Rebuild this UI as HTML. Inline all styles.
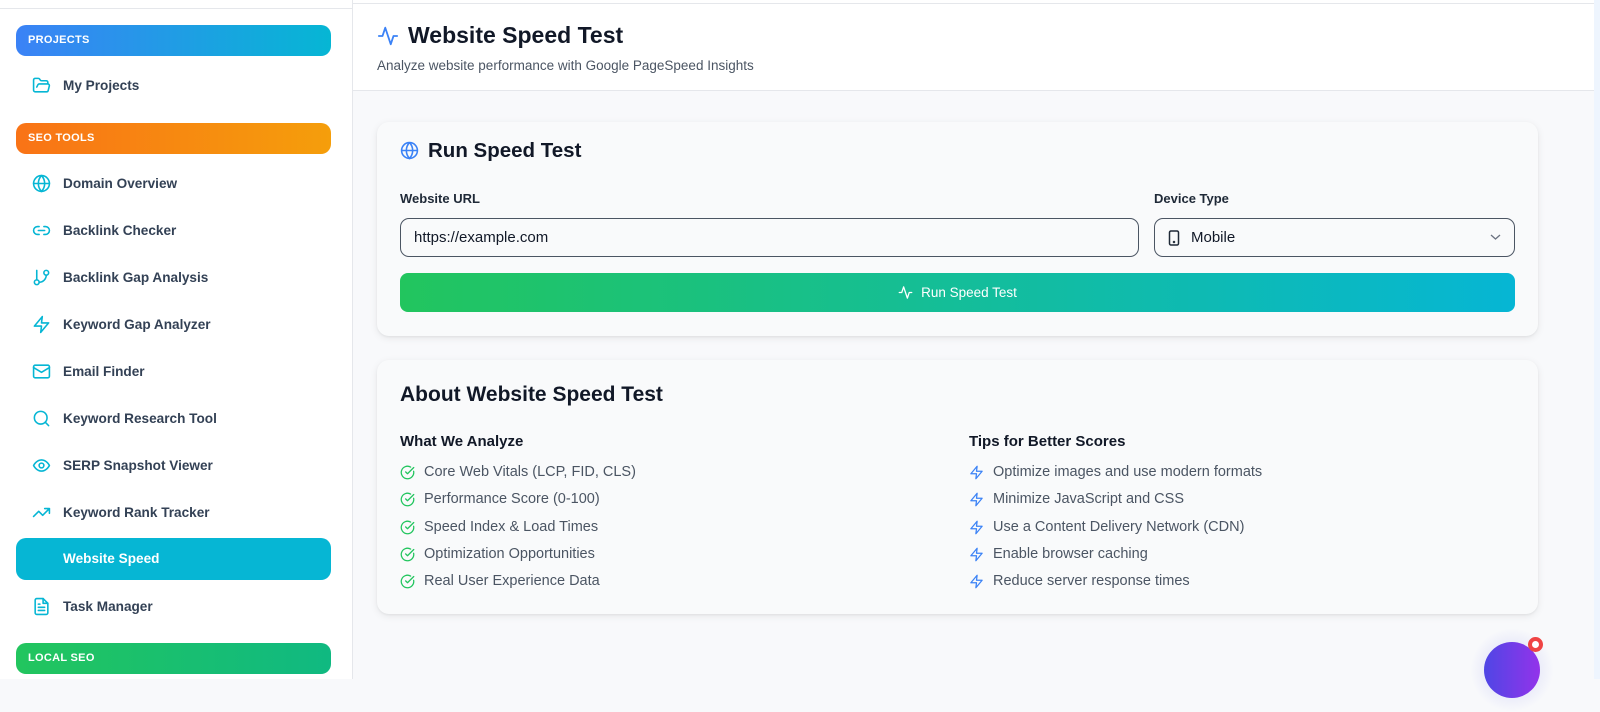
<!DOCTYPE html>
<html><head><meta charset="utf-8">
<style>
*{box-sizing:border-box;margin:0;padding:0}
body{width:1600px;height:679px;overflow:hidden;background:#f8f9fb;font-family:"Liberation Sans",sans-serif;position:relative}
.abs{position:absolute}
#side{left:0;top:0;width:353px;height:679px;background:#fff;border-right:1px solid #e5e7eb}
.pill{position:absolute;left:16px;width:315px;height:31px;border-radius:10px;color:#fff;font-size:11px;font-weight:bold;letter-spacing:.3px;padding-left:12px;line-height:31px}
.item{position:absolute;left:32px;height:20px;display:flex;align-items:center;font-size:13.6px;font-weight:bold;color:#334155}
.item svg{width:19px;height:19px;margin-right:12px;stroke:#06b6d4;fill:none;stroke-width:2;stroke-linecap:round;stroke-linejoin:round}
.card{position:absolute;left:377px;width:1161px;background:#f9fafb;border-radius:12px;box-shadow:0 2px 8px rgba(0,0,0,.08),0 1px 2px rgba(0,0,0,.05)}
.li{position:absolute;display:flex;align-items:center;font-size:14.5px;color:#4b5563;height:18px}
.li svg{width:15px;height:15px;margin-right:9px;fill:none;stroke-width:2;stroke-linecap:round;stroke-linejoin:round}
</style></head><body>
<div id="side" class="abs">
 <div class="abs" style="left:0;top:8px;width:352px;height:1px;background:#e5e7eb"></div>
 <div class="pill" style="top:25px;background:linear-gradient(90deg,#3b82f6,#06b6d4)">PROJECTS</div>
 <div class="item" style="top:75px"><svg viewBox="0 0 24 24"><path d="M6 14l1.5-3A2 2 0 0 1 9.3 10H20a2 2 0 0 1 1.9 2.5l-1.5 6A2 2 0 0 1 18.5 20H4a2 2 0 0 1-2-2V5a2 2 0 0 1 2-2h3.9a2 2 0 0 1 1.7.9l.8 1.2a2 2 0 0 0 1.7.9H18a2 2 0 0 1 2 2v2"/></svg>My Projects</div>
 <div class="pill" style="top:123px;background:linear-gradient(90deg,#f97316,#f59e0b)">SEO TOOLS</div>
 <div class="item" style="top:173px"><svg viewBox="0 0 24 24"><circle cx="12" cy="12" r="10"/><path d="M12 2a14.5 14.5 0 0 0 0 20 14.5 14.5 0 0 0 0-20M2 12h20"/></svg>Domain Overview</div>
 <div class="item" style="top:220px"><svg viewBox="0 0 24 24"><path d="M9 17H7A5 5 0 0 1 7 7h2M15 7h2a5 5 0 1 1 0 10h-2M8 12h8"/></svg>Backlink Checker</div>
 <div class="item" style="top:267px"><svg viewBox="0 0 24 24"><path d="M6 3v12"/><circle cx="18" cy="6" r="3"/><circle cx="6" cy="18" r="3"/><path d="M18 9a9 9 0 0 1-9 9"/></svg>Backlink Gap Analysis</div>
 <div class="item" style="top:314px"><svg viewBox="0 0 24 24"><path d="M13 2L3 14h9l-1 8 10-12h-9l1-8z"/></svg>Keyword Gap Analyzer</div>
 <div class="item" style="top:361px"><svg viewBox="0 0 24 24"><rect x="2" y="4" width="20" height="16" rx="2"/><path d="M22 7l-10 6L2 7"/></svg>Email Finder</div>
 <div class="item" style="top:408px"><svg viewBox="0 0 24 24"><circle cx="11" cy="11" r="8"/><path d="M21 21l-4.3-4.3"/></svg>Keyword Research Tool</div>
 <div class="item" style="top:455px"><svg viewBox="0 0 24 24"><path d="M2 12s3.5-7 10-7 10 7 10 7-3.5 7-10 7S2 12 2 12z"/><circle cx="12" cy="12" r="3"/></svg>SERP Snapshot Viewer</div>
 <div class="item" style="top:502px"><svg viewBox="0 0 24 24"><path d="M22 7l-8.5 8.5-5-5L2 17M16 7h6v6"/></svg>Keyword Rank Tracker</div>
 <div class="pill" style="top:538px;height:42px;line-height:42px;background:#06b6d4;font-size:13.6px;letter-spacing:0;padding-left:47px">Website Speed</div>
 <div class="item" style="top:596px"><svg viewBox="0 0 24 24"><path d="M14 2H6a2 2 0 0 0-2 2v16a2 2 0 0 0 2 2h12a2 2 0 0 0 2-2V8z"/><path d="M14 2v6h6M16 13H8M16 17H8M10 9H8"/></svg>Task Manager</div>
 <div class="pill" style="top:643px;background:linear-gradient(90deg,#22c55e,#10b981)">LOCAL SEO</div>
</div>

<div class="abs" style="left:353px;top:0;width:1241px;height:4px;background:#fff;border-bottom:1px solid #e5e7eb"></div>
<div class="abs" style="left:353px;top:4px;width:1241px;height:87px;background:#fff;border-bottom:1px solid #e5e7eb"></div>
<div class="abs" style="left:1594px;top:0;width:6px;height:679px;background:#eef5fe"></div>
<svg class="abs" style="left:377px;top:25px" width="22" height="22" viewBox="0 0 24 24" fill="none" stroke="#3b82f6" stroke-width="2" stroke-linecap="round" stroke-linejoin="round"><path d="M22 12h-4l-3 9L9 3l-3 9H2"/></svg>
<div class="abs" style="left:408px;top:22px;font-size:23px;font-weight:bold;color:#111827">Website Speed Test</div>
<div class="abs" style="left:377px;top:58px;font-size:13.5px;color:#4b5563">Analyze website performance with Google PageSpeed Insights</div>

<div class="card" style="top:122px;height:214px">
 <svg class="abs" style="left:23px;top:19px" width="19" height="19" viewBox="0 0 24 24" fill="none" stroke="#3b82f6" stroke-width="2"><circle cx="12" cy="12" r="10"/><path d="M12 2a14.5 14.5 0 0 0 0 20 14.5 14.5 0 0 0 0-20M2 12h20"/></svg>
 <div class="abs" style="left:51px;top:17px;font-size:20.5px;font-weight:bold;color:#111827">Run Speed Test</div>
 <div class="abs" style="left:23px;top:69px;font-size:13px;font-weight:bold;color:#1f2937">Website URL</div>
 <div class="abs" style="left:777px;top:69px;font-size:13px;font-weight:bold;color:#1f2937">Device Type</div>
 <div class="abs" style="left:23px;top:96px;width:739px;height:39px;border:1px solid #4b5563;border-radius:9px;font-size:15px;color:#111827;padding-left:13px;line-height:37px">https://example.com</div>
 <div class="abs" style="left:777px;top:96px;width:361px;height:39px;border:1px solid #4b5563;border-radius:9px;font-size:15px;color:#111827;padding-left:36px;line-height:37px">Mobile
  <svg class="abs" style="left:13px;top:11px" width="12" height="16" viewBox="0 0 12 16" fill="none" stroke="#1f2937" stroke-width="1.5"><rect x="1.5" y="1" width="9" height="14" rx="1.5"/><circle cx="6" cy="12" r=".5"/></svg>
  <svg class="abs" style="left:335px;top:14px" width="11" height="8" viewBox="0 0 11 8" fill="none" stroke="#6b7280" stroke-width="1.3"><path d="M1 2l4.5 4L10 2"/></svg>
 </div>
 <div class="abs" style="left:23px;top:151px;width:1115px;height:39px;border-radius:8px;background:linear-gradient(90deg,#22c55e,#06b6d4);color:#fff;font-size:13.5px;text-align:center;line-height:39px"><svg style="vertical-align:-3px;margin-right:8px" width="15" height="15" viewBox="0 0 24 24" fill="none" stroke="#fff" stroke-width="2" stroke-linecap="round" stroke-linejoin="round"><path d="M22 12h-4l-3 9L9 3l-3 9H2"/></svg>Run Speed Test</div>
</div>

<div class="card" style="top:360px;height:254px">
 <div class="abs" style="left:23px;top:23px;font-size:21px;font-weight:bold;color:#111827">About Website Speed Test</div>
 <div class="abs" style="left:23px;top:73px;font-size:15px;font-weight:bold;color:#111827">What We Analyze</div>
 <div class="abs" style="left:592px;top:73px;font-size:15px;font-weight:bold;color:#111827">Tips for Better Scores</div>
</div>
<div class="li" style="left:400px;top:463px"><svg viewBox="0 0 24 24" stroke="#22c55e"><path d="M21.8 10A10 10 0 1 1 17 3.3"/><path d="M9 11l3 3L22 4"/></svg>Core Web Vitals (LCP, FID, CLS)</div>
<div class="li" style="left:400px;top:490px"><svg viewBox="0 0 24 24" stroke="#22c55e"><path d="M21.8 10A10 10 0 1 1 17 3.3"/><path d="M9 11l3 3L22 4"/></svg>Performance Score (0-100)</div>
<div class="li" style="left:400px;top:518px"><svg viewBox="0 0 24 24" stroke="#22c55e"><path d="M21.8 10A10 10 0 1 1 17 3.3"/><path d="M9 11l3 3L22 4"/></svg>Speed Index &amp; Load Times</div>
<div class="li" style="left:400px;top:545px"><svg viewBox="0 0 24 24" stroke="#22c55e"><path d="M21.8 10A10 10 0 1 1 17 3.3"/><path d="M9 11l3 3L22 4"/></svg>Optimization Opportunities</div>
<div class="li" style="left:400px;top:572px"><svg viewBox="0 0 24 24" stroke="#22c55e"><path d="M21.8 10A10 10 0 1 1 17 3.3"/><path d="M9 11l3 3L22 4"/></svg>Real User Experience Data</div>
<div class="li" style="left:969px;top:463px"><svg viewBox="0 0 24 24" stroke="#3b82f6"><path d="M13 2L3 14h9l-1 8 10-12h-9l1-8z"/></svg>Optimize images and use modern formats</div>
<div class="li" style="left:969px;top:490px"><svg viewBox="0 0 24 24" stroke="#3b82f6"><path d="M13 2L3 14h9l-1 8 10-12h-9l1-8z"/></svg>Minimize JavaScript and CSS</div>
<div class="li" style="left:969px;top:518px"><svg viewBox="0 0 24 24" stroke="#3b82f6"><path d="M13 2L3 14h9l-1 8 10-12h-9l1-8z"/></svg>Use a Content Delivery Network (CDN)</div>
<div class="li" style="left:969px;top:545px"><svg viewBox="0 0 24 24" stroke="#3b82f6"><path d="M13 2L3 14h9l-1 8 10-12h-9l1-8z"/></svg>Enable browser caching</div>
<div class="li" style="left:969px;top:572px"><svg viewBox="0 0 24 24" stroke="#3b82f6"><path d="M13 2L3 14h9l-1 8 10-12h-9l1-8z"/></svg>Reduce server response times</div>

<div class="abs" style="left:1470px;top:628px;width:84px;height:84px;border-radius:50%;background:radial-gradient(circle,rgba(99,102,241,.25),rgba(99,102,241,0) 70%)"></div>
<div class="abs" style="left:1484px;top:642px;width:56px;height:56px;border-radius:50%;background:linear-gradient(90deg,#4f46e5,#9333ea)"></div>
<div class="abs" style="left:1528px;top:637px;width:15px;height:15px;border-radius:50%;background:#fff;border:4px solid #ef4444"></div>
</body></html>
